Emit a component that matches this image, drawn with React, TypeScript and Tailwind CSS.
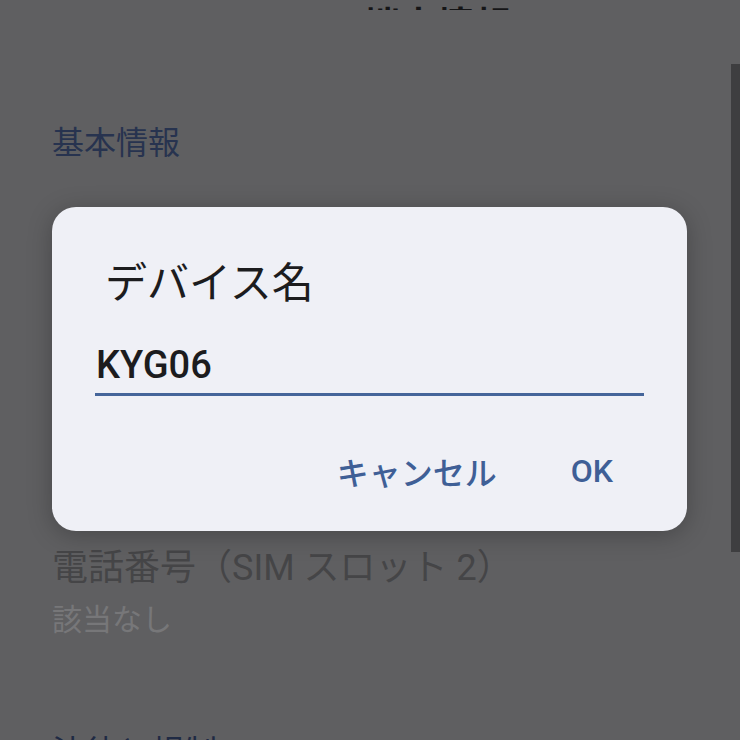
import React from 'react';

const jp = { fontFamily: '"Noto Sans CJK JP", "Noto Sans", sans-serif' };
const mixed = { fontFamily: 'Roboto, "Noto Sans CJK JP", sans-serif' };

export default function App() {
  return (
    <div className="relative w-[740px] h-[740px] overflow-hidden bg-[#5f5f61]" style={jp}>
      {/* page under the scrim */}
      <div className="flex flex-col px-[52px]">
        <div className="h-[10px] overflow-hidden relative">
          <div className="absolute left-[311px] bottom-0 text-[37px] leading-[37px] font-bold text-[#151517] translate-y-[32px]">
            端末情報
          </div>
        </div>
        <div className="mt-[114px] text-[32px] leading-[32px] text-[#27334f]">基本情報</div>
        <div className="mt-[394px] text-[36px] leading-[36px] text-[#454547]" style={mixed}>
          電話番号（SIM スロット 2）
        </div>
        <div className="mt-[16px] text-[30px] leading-[30px] text-[#777779]">該当なし</div>
        <div className="mt-[102px] text-[33px] leading-[33px] text-[#1f2a44]">法律と規制</div>
      </div>

      {/* scrollbar */}
      <div className="absolute right-0 top-[64px] w-[9px] h-[488px] bg-[#3e3e40]" />

      {/* dialog */}
      <div className="absolute left-[52px] top-[207px] w-[635px] h-[324px] rounded-[24px] bg-[#eff0f6] shadow-[0_4px_24px_rgba(0,0,0,0.25)] flex flex-col">
        <div className="pt-[52px] pl-[53px] text-[42px] leading-[42px] text-[#1c1c1e]">デバイス名</div>
        <div className="mt-[45px] mx-[43px] flex flex-col">
          <div className="pl-[1px] text-[38px] leading-[38px] font-medium text-[#1c1c1e]" style={mixed}>
            KYG06
          </div>
          <div className="mt-[9px] h-[3px] bg-[#45659a]" />
        </div>
        <div className="mt-[59px] flex justify-end items-center pr-[74px] gap-[74px] text-[32px] leading-[32px] font-medium text-[#3f5f96]">
          <span style={jp}>キャンセル</span>
          <span style={mixed}>OK</span>
        </div>
      </div>
    </div>
  );
}
